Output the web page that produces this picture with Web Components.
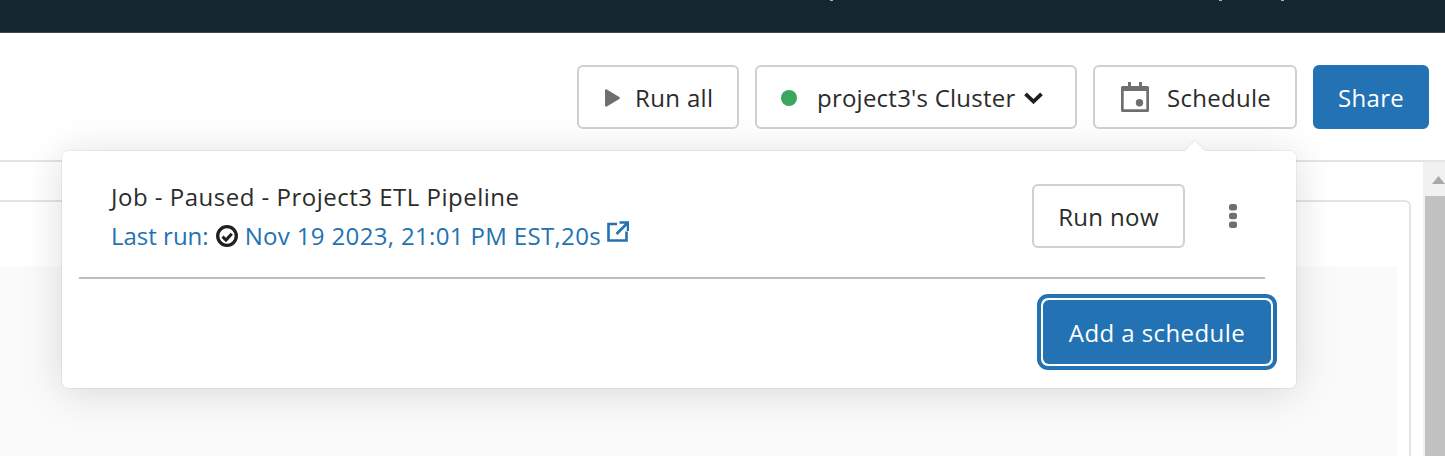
<!DOCTYPE html>
<html><head><meta charset="utf-8">
<style>
html,body{margin:0;padding:0;height:100%;overflow:hidden;background:#fff}
body{font-family:"Open Sans","Noto Sans",sans-serif;color:#222}
</style></head><body>
<template id="t-btn"><style>
:host{display:inline-flex;box-sizing:border-box;height:64px;align-items:center;justify-content:var(--just,flex-start);border:2px solid #d0d0d0;border-radius:6px;background:#fff;font-size:24px;letter-spacing:var(--ls,.35px);color:#2b2b2b;white-space:nowrap;gap:var(--gap,14px);padding:1px 0 0 var(--pad,24px)}
:host([primary]){background:#2272b4;border-color:#2272b4;color:#fff}
::slotted(svg){flex:none;display:block}
</style><slot></slot></template>
<template id="t-bar"><style>
:host{display:flex;height:33px;box-sizing:border-box;background:#14272f;border-bottom:1px solid #3c4b52;overflow:hidden}
i{display:block;width:3px;height:1px;background:#a9b4b8}
</style><i style="margin-left:830px"></i><i style="margin-left:386px"></i><i style="margin-left:59px"></i></template>
<template id="t-toolbar"><style>
:host{display:flex;justify-content:flex-end;gap:16px;box-sizing:border-box;height:129px;padding:32px 16px 0 0;border-bottom:2px solid #e4e4e4;background:#fff}
</style><slot></slot></template>
<template id="t-content"><style>
:host{display:grid;grid-template-columns:1fr 22px;height:294px}
.main{padding-top:38px;padding-right:12px;min-width:0}
.card{height:100%;box-sizing:border-box;border:2px solid #e4e4e4;border-left:0;border-bottom:0;border-radius:0 6px 0 0;padding-top:64px;padding-right:12px;background:#fff}
.panel{height:100%;background:#fafafa;border-radius:0 3px 0 0}
.track{background:#f1f1f1;display:flex;flex-direction:column;overflow:hidden}
.up{height:34px;box-sizing:border-box;padding:14px 0 0 9px;flex:none}
.up svg{display:block}
.thumb{flex:1;background:#c1c1c1;margin-left:2px}
</style><div class="main"><div class="card"><div class="panel"></div></div></div>
<div class="track"><div class="up"><svg width="13" height="8" viewBox="0 0 13 8"><path d="M6.500 0 13 8H0z" fill="#a8a8a8"/></svg></div><div class="thumb"></div></div></template>
<template id="t-pop"><style>
:host{position:absolute;left:62px;top:151px;width:1234px;height:237px;box-sizing:border-box;background:#fff;border-radius:6px;box-shadow:0 0 0 1px rgba(0,0,0,.045),0 4px 40px rgba(0,0,0,.14);display:flex;flex-direction:column;padding:0 17px}
.arrow{position:absolute;top:-10px;left:1123px;width:20px;height:20px;background:#fff;transform:rotate(45deg) scale(.72);box-shadow:-1px -1px 1px rgba(0,0,0,.08)}
.top{height:128px;box-sizing:border-box;display:flex;align-items:flex-start;border-bottom:2px solid #bdbdbd;position:relative;margin-right:14px}
.info{flex:1;padding:26px 0 0 32px;font-size:24px;line-height:39px}
.title{color:#2b2b2b;letter-spacing:.5px}
.link{color:#2272b4;display:flex;align-items:center;white-space:nowrap;letter-spacing:.35px}
.act{display:flex;align-items:center;padding-top:33px;padding-right:27px;gap:43px}
.foot{display:flex;justify-content:flex-end;padding-top:15px;margin-right:2px}
</style>
<div class="arrow"></div>
<div class="top"><div class="info"><div class="title"><slot name="title"></slot></div><div class="link"><slot name="link"></slot></div></div><div class="act"><slot name="act"></slot></div></div>
<div class="foot"><slot name="foot"></slot></div>
</template>
<template id="t-focus"><style>
:host{display:inline-flex;box-sizing:border-box;height:76px;width:240px;padding:2px;border-radius:11px;border:4px solid #2272b4;background:#fff}
.in{flex:1;background:#2272b4;border-radius:6px;color:#fff;display:flex;align-items:center;justify-content:center;font-size:24px;letter-spacing:.42px;white-space:nowrap}
</style><div class="in"><slot></slot></div></template>

<app-shell></app-shell>
<script>
function def(name,tid){customElements.define(name,class extends HTMLElement{constructor(){super();this.attachShadow({mode:'open'}).appendChild(document.getElementById(tid).content.cloneNode(true));}});}
def('top-bar','t-bar');def('tool-bar','t-toolbar');def('ui-btn','t-btn');def('page-content','t-content');def('job-popover','t-pop');def('focus-btn','t-focus');
customElements.define('app-shell',class extends HTMLElement{constructor(){super();const s=this.attachShadow({mode:'open'});s.innerHTML=`<style>:host{display:block;position:relative;height:456px;overflow:hidden}</style>
<top-bar></top-bar>
<tool-bar>
<ui-btn style="--gap:15px;--pad:26px;width:162px"><svg width="15" height="18" viewBox="0 0 15 18"><path d="M0 1.500v15c0 1 1 1.500 1.800 1L14.300 10c.8-.5.8-1.500 0-2L1.800.500C1 0 0 .500 0 1.500z" fill="#6f6f6f"/></svg><span>Run all</span></ui-btn>
<ui-btn style="--gap:20px;--pad:24px;--ls:.23px;width:322px"><svg width="16" height="16" viewBox="0 0 16 16"><circle cx="8" cy="8" r="8" fill="#3ba65e"/></svg><span>project3's Cluster</span><svg style="margin-left:-11px" width="19" height="12" viewBox="0 0 19 12"><path d="M1.500 1.800 9.500 9.500 17.500 1.800" fill="none" stroke="#1f1f1f" stroke-width="3.800"/></svg></ui-btn>
<ui-btn style="--gap:18px;--pad:26px;--ls:.28px;width:204px"><svg style="margin-top:-1px" width="28" height="30" viewBox="0 0 28 30"><path fill="#6f6f6f" fill-rule="evenodd" d="M7 0h3v4h8V0h3v4h5.500Q28 4 28 5.500v23q0 1.500-1.500 1.500h-25Q0 30 0 28.500v-23Q0 4 1.500 4H7zM2.700 9v18.300h22.600V9z"/><circle cx="18.500" cy="20.700" r="3.700" fill="#6f6f6f"/></svg><span>Schedule</span></ui-btn>
<ui-btn primary style="--pad:0;--just:center;width:116px"><span>Share</span></ui-btn>
</tool-bar>
<page-content></page-content>
<job-popover>
<span slot="title">Job - Paused - Project3 ETL Pipeline</span>
<span slot="link" style="display:flex;align-items:center;white-space:nowrap"><span style="letter-spacing:0">Last run:</span><svg style="margin:0 7px" width="22" height="22" viewBox="0 0 22 22"><circle cx="11" cy="11" r="9.300" fill="none" stroke="#1f1f1f" stroke-width="3.300"/><path d="M6.500 11.600 10 15 15.800 8.800" fill="none" stroke="#1f1f1f" stroke-width="3"/></svg>Nov 19 2023, 21:01 PM EST,20s<svg style="margin:-8px 0 0 6px" width="22" height="22" viewBox="0 0 22 22"><path d="M10 3H1.500V19.500H19.500V10.500" fill="none" stroke="#2272b4" stroke-width="2.600"/><path d="M12.500 1.500h8.500V10M20.500 2 9.500 13" fill="none" stroke="#2272b4" stroke-width="2.600"/></svg></span>
<ui-btn slot="act" style="--pad:0;--just:center;width:153px"><span>Run now</span></ui-btn>
<svg slot="act" width="10" height="24" viewBox="0 0 10 24"><rect x="1" y="0" width="8" height="6.500" rx="2.500" fill="#6f6f6f"/><rect x="1" y="8.700" width="8" height="6.500" rx="2.500" fill="#6f6f6f"/><rect x="1" y="17.400" width="8" height="6.500" rx="2.500" fill="#6f6f6f"/></svg>
<focus-btn slot="foot">Add a schedule</focus-btn>
</job-popover>`;}});
</script>
</body></html>
